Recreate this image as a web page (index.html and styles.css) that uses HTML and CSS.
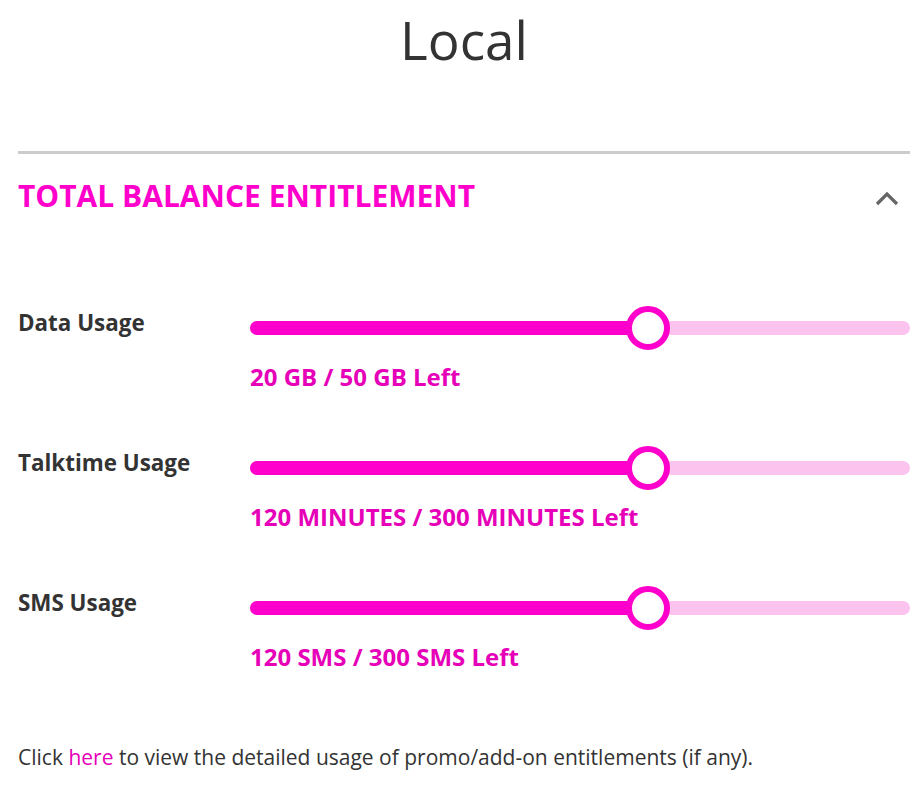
FILE: index.html
```html
<!DOCTYPE html>
<html lang="en">
<head>
  <meta charset="UTF-8" />
  <title>Local</title>
  <link rel="stylesheet" href="styles.css">
</head>
<body>
  <div class="container">
    <h1 class="title">Local</h1>
    <hr />
    <div class="section-head">
      <h2>TOTAL BALANCE ENTITLEMENT</h2>
      <svg class="chevron" width="26" height="16" viewBox="0 0 26 16">
        <path d="M3 13 L13 3 L23 13" fill="none" stroke="#666" stroke-width="3.2" />
      </svg>
    </div>

    <div class="usage-row">
      <div class="usage-label">Data Usage</div>
      <div class="usage-info">
        <div class="slider">
          <div class="fill" style="width: 60.3%"></div>
          <div class="thumb" style="left: 60.3%"></div>
        </div>
        <div class="usage-value">20 GB / 50 GB Left</div>
      </div>
    </div>

    <div class="usage-row">
      <div class="usage-label">Talktime Usage</div>
      <div class="usage-info">
        <div class="slider">
          <div class="fill" style="width: 60.3%"></div>
          <div class="thumb" style="left: 60.3%"></div>
        </div>
        <div class="usage-value">120 MINUTES / 300 MINUTES Left</div>
      </div>
    </div>

    <div class="usage-row">
      <div class="usage-label">SMS Usage</div>
      <div class="usage-info">
        <div class="slider">
          <div class="fill" style="width: 60.3%"></div>
          <div class="thumb" style="left: 60.3%"></div>
        </div>
        <div class="usage-value">120 SMS / 300 SMS Left</div>
      </div>
    </div>

    <p class="note">Click <a href="#">here</a> to view the detailed usage of promo/add-on entitlements (if any).</p>
  </div>
</body>
</html>
```

FILE: styles.css
```css
* {
  box-sizing: border-box;
  margin: 0;
  padding: 0;
}
body {
  font-family: "Open Sans", Arial, sans-serif;
  background-color: #fff;
  color: #333;
}
.container {
  padding: 0 13px 0 18px;
}
.title {
  font-size: 53px;
  font-weight: 400;
  text-align: center;
  line-height: 1;
  padding-top: 13px;
  margin-bottom: 85px;
  color: #333;
}
hr {
  border: none;
  border-top: 3px solid #ccc;
}
.section-head {
  display: flex;
  align-items: center;
  justify-content: space-between;
  padding-top: 23px;
  margin-bottom: 93px;
}
.section-head h2 {
  font-size: 30px;
  font-weight: 700;
  color: #f0c;
  line-height: 38px;
}
.chevron {
  margin: 5px 10px 0 0;
}
.usage-row {
  display: flex;
  margin-bottom: 56px;
}
.usage-label {
  width: 232px;
  font-size: 22.4px;
  font-weight: 700;
  color: #333;
  line-height: 30px;
}
.usage-info {
  flex: 1;
  padding-top: 13px;
}
.slider {
  position: relative;
  height: 14px;
  border-radius: 7px;
  background-color: #fdc3ef;
}
.fill {
  height: 100%;
  border-radius: 7px;
  background-color: #f0c;
}
.thumb {
  position: absolute;
  top: 50%;
  width: 44px;
  height: 44px;
  margin: -22px 0 0 -22px;
  border-radius: 50%;
  border: 6px solid #f0c;
  background-color: #fff;
}
.usage-value {
  margin-top: 27px;
  font-size: 24px;
  font-weight: 700;
  color: #e600b8;
  line-height: 30px;
}
.note {
  font-size: 21px;
  line-height: 28px;
  color: #333;
  margin-top: 71px;
}
.usage-row:last-of-type {
  margin-bottom: 0;
}
.note a {
  color: #e600b8;
  text-decoration: none;
}
```
